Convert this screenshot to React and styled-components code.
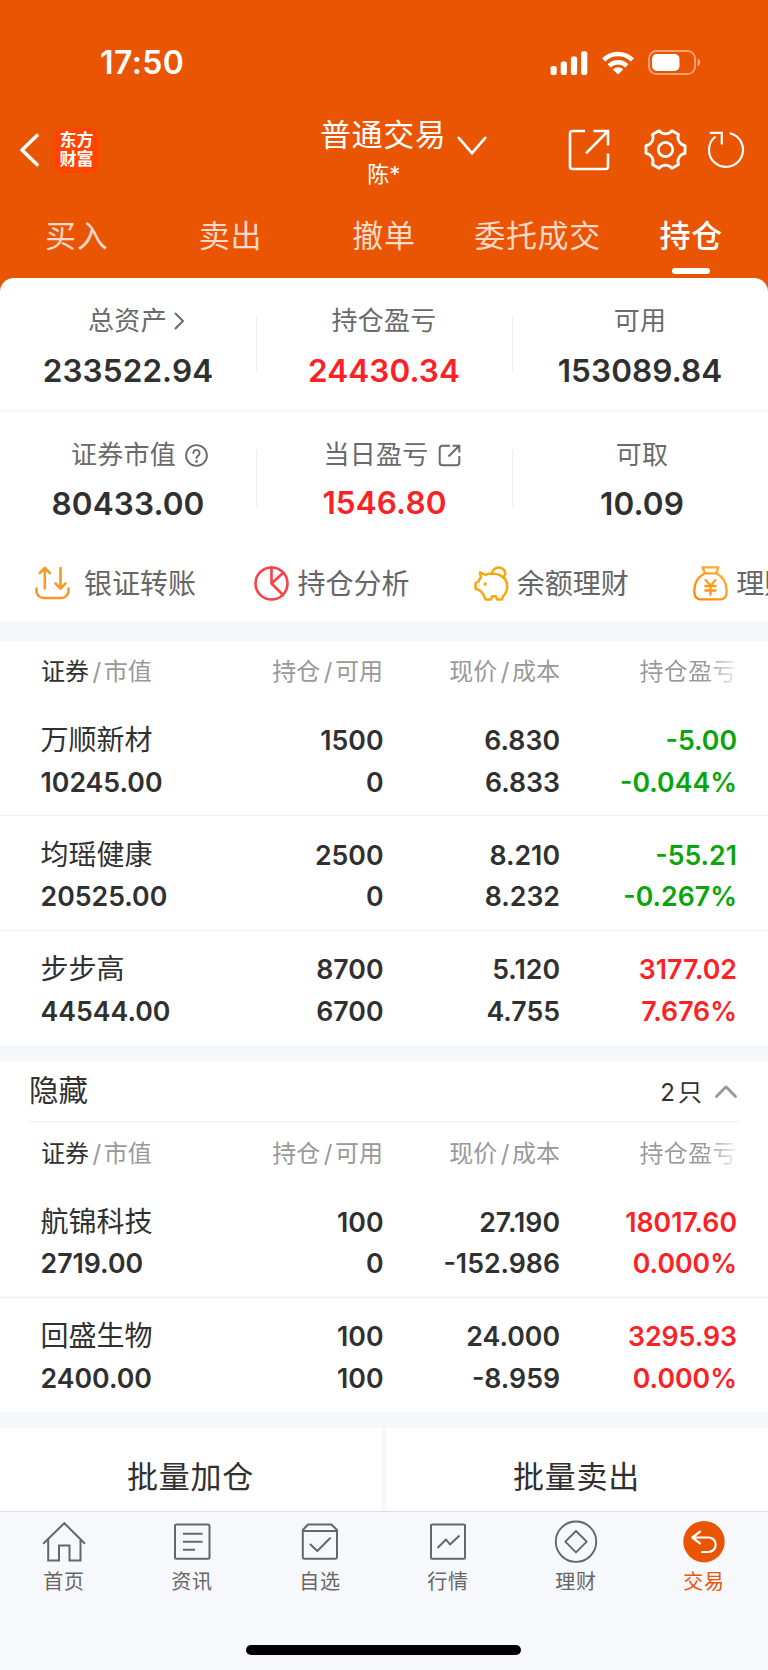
import React from "react";
import styled, { createGlobalStyle } from "styled-components";

const ORANGE = "#ea5504";
const RED = "#fb2226";
const GREEN = "#0aa50a";

const GlobalStyle = createGlobalStyle`
  * {
    box-sizing: border-box;
  }
  body {
    margin: 0;
    background: #f7f8fb;
    font-family: Inter, "Noto Sans CJK SC", sans-serif;
    color: #303030;
  }
  svg {
    display: block;
    flex: none;
  }
`;

const Page = styled.div`
  width: 768px;
  height: 1670px;
  overflow: hidden;
  display: flex;
  flex-direction: column;
  background: ${ORANGE};
`;

/* ---------- header ---------- */

const StatusBar = styled.div`
  height: 112px;
  padding: 13px 67px 0 100px;
  display: flex;
  align-items: center;
  justify-content: space-between;
  color: #fff;
`;

const Time = styled.span`
  font-size: 32px;
  line-height: 40px;
  font-weight: 600;
  letter-spacing: 0.4px;
`;

const StatusIcons = styled.div`
  display: flex;
  align-items: center;
  gap: 14px;
`;

const NavBar = styled.div`
  height: 76px;
  display: grid;
  grid-template-columns: 320px 248px auto;
  grid-template-rows: 76px;
  align-items: center;
  color: #fff;
`;

const NavLeft = styled.div`
  display: flex;
  align-items: center;
  gap: 14px;
  padding-left: 19px;
`;

const Logo = styled.div`
  width: 45px;
  height: 45px;
  padding-top: 3px;
  border-radius: 9px;
  background: #ff4500;
  font-size: 17px;
  line-height: 19px;
  font-weight: 700;
  text-align: center;
`;

const Title = styled.div`
  align-self: start;
  display: flex;
  gap: 11px;
`;

const TitleText = styled.div`
  padding-top: 2px;
  text-align: center;
`;

const TitleName = styled.div`
  font-size: 31px;
  line-height: 42px;
  letter-spacing: 0.6px;
`;

const TitleUser = styled.div`
  padding-left: 1px;
  font-size: 22px;
  line-height: 36px;
`;

const TitleArrow = styled.div`
  padding-top: 24px;
`;

const NavActions = styled.div`
  display: flex;
  align-items: center;
`;

const Tabs = styled.div`
  height: 90px;
  display: grid;
  grid-template-columns: repeat(5, 1fr);
`;

const Tab = styled.div`
  display: flex;
  flex-direction: column;
  align-items: center;
  padding-top: 28px;
  gap: 12px;
  font-size: 31px;
  line-height: 40px;
  letter-spacing: 0.7px;
  white-space: nowrap;
  font-weight: ${(p) => (p.$active ? 500 : 400)};
  color: ${(p) => (p.$active ? "#fff" : "rgba(255, 255, 255, 0.78)")};

  &::after {
    content: "";
    width: 38px;
    height: 6px;
    border-radius: 3px;
    background: ${(p) => (p.$active ? "#fff" : "transparent")};
  }
`;

/* ---------- summary ---------- */

const Summary = styled.section`
  height: 344px;
  flex: none;
  background: #fff;
  border-radius: 14px 14px 0 0;
`;

const StatRow = styled.div`
  height: 134px;
  padding-top: 25px;
  display: grid;
  grid-template-columns: repeat(3, 1fr);
  border-bottom: ${(p) => (p.$line ? "2px solid #f6f6f8" : "none")};
`;

const Stat = styled.div`
  position: relative;
  display: flex;
  flex-direction: column;
  align-items: center;

  & + &::before {
    content: "";
    position: absolute;
    left: 0;
    top: 13px;
    width: 1px;
    height: 57px;
    background: #eeeef0;
  }
`;

const StatLabel = styled.div`
  display: flex;
  align-items: center;
  gap: ${(p) => p.$gap || 9}px;
  height: 36px;
  font-size: 26px;
  letter-spacing: 0.3px;
  line-height: 36px;
  color: #6a6a6a;
  padding-left: ${(p) => p.$shift || 0}px;
`;

const StatValue = styled.div`
  margin-top: ${(p) => p.$top || 12}px;
  padding-left: ${(p) => p.$shift || 0}px;
  font-size: 31.5px;
  line-height: 40px;
  font-weight: 600;
  letter-spacing: 0.1px;
  color: ${(p) => (p.$red ? RED : "#303030")};
`;

const QuickActions = styled.div`
  height: 76px;
  padding: 0 0 1px 35px;
  display: flex;
  align-items: center;
  overflow: hidden;
`;

const QuickAction = styled.div`
  flex: none;
  width: 219.4px;
  display: flex;
  align-items: center;
  gap: ${(p) => p.$gap || 8}px;
  font-size: 28px;
  line-height: 40px;
  white-space: nowrap;
  color: #666;

  span {
    padding-top: 1px;
  }
`;

/* ---------- holdings ---------- */

const Band = styled.div`
  height: ${(p) => p.$h}px;
  flex: none;
  background: #f6f7fa;
`;

const Table = styled.section`
  flex: none;
  background: #fff;
`;

const HeadRow = styled.div`
  height: 60.5px;
  padding: 13px 31px 0 41px;
  display: grid;
  grid-template-columns: 160px 182px 177px 177px;
  font-size: 24px;
  line-height: 36px;
  text-align: right;
  color: #999;
`;

const HeadCell = styled.div`
  white-space: nowrap;
  text-align: ${(p) => (p.$left ? "left" : "right")};

  b {
    font-weight: 400;
    color: #303030;
  }
  i {
    font-style: normal;
    padding: 0 2.5px 0 3.5px;
  }
`;

const FadeCell = styled(HeadCell)`
  letter-spacing: 0.4px;
  color: transparent;
  background: linear-gradient(to right, #999 82%, rgba(153, 153, 153, 0.15) 100%);
  background-clip: text;
`;

const Row = styled.div`
  height: 114.5px;
  padding: 18.5px 31px 0 40.5px;
  display: grid;
  grid-template-columns: 160px 183px 176.500px 177px;
  border-bottom: ${(p) => (p.$last ? "none" : "1px solid #efeff2")};
`;

const Cell = styled.div`
  display: flex;
  flex-direction: column;
  align-items: ${(p) => (p.$left ? "flex-start" : "flex-end")};
  white-space: nowrap;
  font-size: 26.7px;
  line-height: 41.5px;
  font-weight: 600;
  color: ${(p) => p.$color || "#303030"};
`;

const StockName = styled.span`
  font-size: 28px;
  font-weight: 400;
`;

const HiddenBar = styled.div`
  height: 61.5px;
  margin: 0 29px;
  display: flex;
  align-items: center;
  justify-content: space-between;
  border-bottom: 2px solid #f4f4f6;
`;

const HiddenTitle = styled.div`
  padding-bottom: 2px;
  font-size: 29.5px;
  line-height: 40px;
`;

const HiddenCount = styled.div`
  display: flex;
  align-items: center;
  gap: 13px;
  padding-right: 2px;
  font-size: 24px;

  i {
    font-style: normal;
    padding-left: 3px;
  }
  svg {
    margin-top: 1px;
  }
`;

/* ---------- bottom ---------- */

const BatchBar = styled.div`
  height: 83px;
  flex: none;
  display: grid;
  grid-template-columns: 1fr 1fr;
  gap: 4px;
  background: #f6f7fa;
`;

const BatchButton = styled.div`
  padding: 28px 1px 0 0;
  background: #fff;
  font-size: 31px;
  line-height: 41px;
  letter-spacing: 0.7px;
  text-align: center;
`;

const BottomNav = styled.nav`
  flex: 1;
  display: flex;
  flex-direction: column;
  align-items: center;
  background: #f7f8fb;
  border-top: 1px solid #dddfe7;
`;

const NavItems = styled.div`
  width: 100%;
  height: 133px;
  padding-top: 8px;
  display: grid;
  grid-template-columns: repeat(6, 1fr);
`;

const NavItem = styled.div`
  display: flex;
  flex-direction: column;
  align-items: center;
  gap: 3px;
  font-size: 20px;
  line-height: 30px;
  letter-spacing: 0.8px;
  color: ${(p) => (p.$active ? ORANGE : "#666")};
`;

const HomeIndicator = styled.div`
  width: 275px;
  height: 10px;
  margin-right: 1px;
  border-radius: 5px;
  background: #000;
`;

/* ---------- icons ---------- */

const Svg = ({ w, h = w, sw = 2, children, ...rest }) => (
  <svg
    width={w}
    height={h}
    viewBox={`0 0 ${w} ${h}`}
    fill="none"
    stroke="currentColor"
    strokeWidth={sw}
    strokeLinecap="round"
    strokeLinejoin="round"
    {...rest}
  >
    {children}
  </svg>
);

const GearSvg = styled(Svg)`
  margin: 0 0 1px 33px;
`;

const RefreshSvg = styled(Svg)`
  margin-left: 20px;
`;

// six flat lobes joined by shallow arcs
const gearPath = (c, r) => {
  const pt = (deg) => {
    const a = (deg * Math.PI) / 180;
    return `${(c + r * Math.cos(a)).toFixed(2)} ${(c + r * Math.sin(a)).toFixed(2)}`;
  };
  let d = `M${pt(-11)}`;
  for (let k = 0; k < 6; k++) {
    d += `L${pt(k * 60 + 11)}A8.2 8.2 0 0 0 ${pt(k * 60 + 49)}`;
  }
  return d + "Z";
};

const SignalIcon = () => (
  <svg width="38" height="24" fill="#fff">
    <rect x="0.5" y="15" width="6.2" height="9" rx="2" />
    <rect x="10.7" y="10.5" width="6.2" height="13.5" rx="2" />
    <rect x="20.9" y="5.5" width="6.2" height="18.5" rx="2" />
    <rect x="31.1" y="0.3" width="6.2" height="23.7" rx="2" />
  </svg>
);

const WifiIcon = () => (
  <Svg w={32} h={24} sw={4.6} strokeLinecap="butt">
    <path d="M1.6 8.8a20.6 20.6 0 0 1 28.8 0" />
    <path d="M7.1 14.8a12.8 12.8 0 0 1 17.8 0" />
    <path d="M16 23.6l-5.2-5.2a7.4 7.4 0 0 1 10.4 0z" fill="#fff" stroke="none" />
  </Svg>
);

const BatteryIcon = () => (
  <svg width="53" height="25" fill="none">
    <rect x="1" y="1" width="46" height="23" rx="7.5" stroke="#fff" strokeOpacity="0.45" strokeWidth="1.9" />
    <rect x="4" y="4" width="27.5" height="17" rx="5" fill="#fff" />
    <path d="M49.6 8.6c1.7.8 2.6 2.2 2.6 3.9s-.9 3.1-2.6 3.9z" fill="#fff" fillOpacity="0.5" />
  </svg>
);

const BackIcon = () => (
  <Svg w={21} h={34} sw={3.6}>
    <path d="M18 2.5L3 17l15 14.5" />
  </Svg>
);

const DownIcon = () => (
  <Svg w={30} h={20} sw={2.6}>
    <path d="M1.8 1.8L15 17.2 28.2 1.8" strokeLinejoin="miter" />
  </Svg>
);

const ShareIcon = () => (
  <Svg w={43} sw={2.6} strokeLinecap="butt">
    <path d="M17 2H4.5Q2 2 2 4.5V37.5Q2 40 4.5 40H37.5Q40 40 40 37.5V24.5" />
    <path d="M25.5 2H40V16.5M39.5 2.5L18 24.3" strokeLinejoin="miter" />
  </Svg>
);

const GearIcon = () => (
  <GearSvg w={43} sw={2.8}>
    <path d={gearPath(21.5, 19.9)} />
    <circle cx="21.5" cy="21.5" r="7.2" />
  </GearSvg>
);

const RefreshIcon = () => (
  <RefreshSvg w={38} sw={2.2} strokeLinecap="butt">
    <path d="M22.8 2.3A17 17 0 1 1 8.5 5.5" />
    <path d="M2.8 1.9H14.8V13.5" strokeLinejoin="miter" />
  </RefreshSvg>
);

const RightIcon = () => (
  <Svg w={11} h={18} sw={2}>
    <path d="M1.5 1.5L9 9l-7.5 7.5" />
  </Svg>
);

const HelpIcon = () => (
  <Svg w={23} sw={1.9}>
    <circle cx="11.5" cy="11.5" r="10.4" />
    <path d="M8.4 9.1a3.1 3.1 0 1 1 4.8 2.5c-1.1.7-1.7 1.2-1.7 2.5" />
    <circle cx="11.5" cy="17.4" r="1.3" fill="currentColor" stroke="none" />
  </Svg>
);

const SmallShareIcon = () => (
  <Svg w={23} sw={2} strokeLinecap="butt">
    <path d="M12 1.7H4.5Q1.7 1.7 1.7 4.5V18.5Q1.7 21.3 4.5 21.3H18.5Q21.3 21.3 21.3 18.5V12" />
    <path d="M14.5 1.7H21.3V8.5M21 2L10.5 12.5" strokeLinejoin="miter" />
  </Svg>
);

const TransferIcon = () => (
  <Svg w={35} sw={2.6} color="#f59a23">
    <path d="M1.5 22.5v2.5a7 7 0 0 0 7 7h18a7 7 0 0 0 7-7v-2.5" />
    <path d="M9.8 22.5V2M4.8 7l5-5 5 5M25.5 2v20.5M20.5 17.5l5 5 5-5" />
  </Svg>
);

const PieIcon = () => (
  <Svg w={35} sw={2.6} color="#fb4046">
    <circle cx="17.5" cy="17.5" r="16" />
    <path d="M17.5 1.5V17.5L29 29M17.5 17.5L29.3 6.7" />
  </Svg>
);

// the body outline is drawn closed, the coin sits behind its back
const PiggyIcon = () => (
  <Svg w={35} sw={2.5} color="#fba60a">
    <path d="M17.8 8C18 4.5 21 1.4 24.8 1.4c4.3 0 7 3.4 6.2 7.2-.3 1.2-.8 2-1.6 2.900" />
    <path d="M5.8 6.5L11.5 8.800C15 7.5 21 7.200 25.5 9c5.300 2.200 7.700 6 7.700 11 0 4.500-1.300 7.800-4.200 10.300l-1 3.200h-5l-1.200-3.200h-3.600l-1.200 3.200h-5.500l-1.700-4.200C9 27.500 8 26.200 6.500 24.800L1.500 22.500v-5.500l3-1.500c.5-1.500 1-2.500 2.500-4z" />
    <circle cx="11.2" cy="18" r="1.7" fill="currentColor" stroke="none" />
  </Svg>
);

const BagIcon = () => (
  <Svg w={35} sw={2.3} stroke="url(#bag)">
    <defs>
      <linearGradient id="bag" gradientUnits="userSpaceOnUse" x1="0" y1="35" x2="28" y2="0">
        <stop offset="0" stopColor="#ff8200" />
        <stop offset="1" stopColor="#ffb13c" />
      </linearGradient>
    </defs>
    <path d="M9.5 1.3h16l-2.5 6H12z" />
    <path d="M12 7.3C5.5 10.5 1.3 17 1.3 25c0 5.5 2 8.3 6 8.3h20.4c4 0 6-2.8 6-8.3 0-8-4.2-14.5-10.7-17.7" />
    <path d="M12.5 14l5 5.5 5-5.5M17.5 19.5v9.3M12.3 20h10.4M12.3 24.5h10.4" />
  </Svg>
);

const UpIcon = () => (
  <Svg w={22} h={13} sw={2.8} color="#999">
    <path d="M1.5 11.5L11 1.8l9.5 9.7" />
  </Svg>
);

const HomeIcon = () => (
  <Svg w={44} sw={2} strokeLinecap="butt">
    <path d="M1.2 23.8L22.3 3.2 43 23.8M6.2 19.3V40.6H17V25.5H27.5V40.6H38.5V19.3" strokeLinejoin="miter" />
  </Svg>
);

const NewsIcon = () => (
  <Svg w={44} sw={2} strokeLinecap="butt">
    <rect x="5" y="4.5" width="34.5" height="34.3" rx="1.5" />
    <path d="M13 13.7h19.5M13 21.7h19.5M13 29.7h12" />
  </Svg>
);

const WatchIcon = () => (
  <Svg w={44} sw={2}>
    <path d="M4.8 10L10 4.5H33.5L39 10V37Q39 38.8 37 38.8H6.5Q4.8 38.8 4.8 37ZM4.8 11H39" />
    <path d="M12.5 24.5l6.8 6.5L32 18.3" />
  </Svg>
);

const QuoteIcon = () => (
  <Svg w={44} sw={2} strokeLinecap="butt">
    <rect x="5" y="4.5" width="34" height="34.3" rx="1" />
    <path d="M11.5 28l8.5-8.5 4 5L33.5 15.5" />
  </Svg>
);

const WealthIcon = () => (
  <Svg w={44} sw={1.9}>
    <circle cx="22" cy="21.7" r="20.2" />
    <path d="M22 11L32.7 21.7 22 32.4 11.3 21.7z" />
  </Svg>
);

const TradeIcon = () => (
  <Svg w={44} sw={2.2}>
    <circle cx="22" cy="21.7" r="20.7" fill={ORANGE} stroke="none" />
    <path d="M18 11.7L10.3 17.5 18 23.3M10.5 17.5H26.500a7.100 7.100 0 0 1 0 14.500H20" stroke="#fff" />
  </Svg>
);

/* ---------- data ---------- */

const tabs = ["买入", "卖出", "撤单", "委托成交", "持仓"];

const holdings = [
  ["万顺新材", "10245.00", "1500", "0", "6.830", "6.833", "-5.00", "-0.044%"],
  ["均瑶健康", "20525.00", "2500", "0", "8.210", "8.232", "-55.21", "-0.267%"],
  ["步步高", "44544.00", "8700", "6700", "5.120", "4.755", "3177.02", "7.676%"],
];

const hiddenHoldings = [
  ["航锦科技", "2719.00", "100", "0", "27.190", "-152.986", "18017.60", "0.000%"],
  ["回盛生物", "2400.00", "100", "100", "24.000", "-8.959", "3295.93", "0.000%"],
];

const navItems = [
  ["首页", HomeIcon],
  ["资讯", NewsIcon],
  ["自选", WatchIcon],
  ["行情", QuoteIcon],
  ["理财", WealthIcon],
  ["交易", TradeIcon],
];

const HoldingsHead = () => (
  <HeadRow>
    <HeadCell $left>
      <b>证券</b>
      <i>/</i>市值
    </HeadCell>
    <HeadCell>
      持仓<i>/</i>可用
    </HeadCell>
    <HeadCell>
      现价<i>/</i>成本
    </HeadCell>
    <FadeCell>持仓盈亏</FadeCell>
  </HeadRow>
);

const HoldingRows = ({ rows }) =>
  rows.map(([name, value, total, usable, price, cost, profit, rate], index) => (
    <Row key={name} $last={index === rows.length - 1}>
      <Cell $left>
        <StockName>{name}</StockName>
        <span>{value}</span>
      </Cell>
      <Cell>
        <span>{total}</span>
        <span>{usable}</span>
      </Cell>
      <Cell>
        <span>{price}</span>
        <span>{cost}</span>
      </Cell>
      <Cell $color={profit.startsWith("-") ? GREEN : RED}>
        <span>{profit}</span>
        <span>{rate}</span>
      </Cell>
    </Row>
  ));

const App = () => {
  return (
    <>
      <GlobalStyle />
      <Page>
        <StatusBar>
          <Time>17:50</Time>
          <StatusIcons>
            <SignalIcon />
            <WifiIcon />
            <BatteryIcon />
          </StatusIcons>
        </StatusBar>

        <NavBar>
          <NavLeft>
            <BackIcon />
            <Logo>
              东方
              <br />
              财富
            </Logo>
          </NavLeft>
          <Title>
            <TitleText>
              <TitleName>普通交易</TitleName>
              <TitleUser>陈*</TitleUser>
            </TitleText>
            <TitleArrow>
              <DownIcon />
            </TitleArrow>
          </Title>
          <NavActions>
            <ShareIcon />
            <GearIcon />
            <RefreshIcon />
          </NavActions>
        </NavBar>

        <Tabs>
          {tabs.map((tab) => (
            <Tab key={tab} $active={tab === "持仓"}>
              {tab}
            </Tab>
          ))}
        </Tabs>

        <Summary>
          <StatRow $line>
            <Stat>
              <StatLabel $shift={17} $gap={7}>
                总资产
                <RightIcon />
              </StatLabel>
              <StatValue>233522.94</StatValue>
            </Stat>
            <Stat>
              <StatLabel>持仓盈亏</StatLabel>
              <StatValue $red>24430.34</StatValue>
            </Stat>
            <Stat>
              <StatLabel>可用</StatLabel>
              <StatValue>153089.84</StatValue>
            </Stat>
          </StatRow>
          <StatRow>
            <Stat>
              <StatLabel $shift={23}>
                证券市值
                <HelpIcon />
              </StatLabel>
              <StatValue $top={11}>80433.00</StatValue>
            </Stat>
            <Stat>
              <StatLabel $shift={16}>
                当日盈亏
                <SmallShareIcon />
              </StatLabel>
              <StatValue $red $top={10} $shift={1}>
                1546.80
              </StatValue>
            </Stat>
            <Stat>
              <StatLabel $shift={4}>可取</StatLabel>
              <StatValue $top={11} $shift={4}>
                10.09
              </StatValue>
            </Stat>
          </StatRow>
          <QuickActions>
            <QuickAction $gap={14}>
              <TransferIcon />
              <span>银证转账</span>
            </QuickAction>
            <QuickAction>
              <PieIcon />
              <span>持仓分析</span>
            </QuickAction>
            <QuickAction>
              <PiggyIcon />
              <span>余额理财</span>
            </QuickAction>
            <QuickAction>
              <BagIcon />
              <span>理财</span>
            </QuickAction>
          </QuickActions>
        </Summary>

        <Band $h={19} />
        <Table>
          <HoldingsHead />
          <HoldingRows rows={holdings} />
        </Table>

        <Band $h={16} />
        <Table>
          <HiddenBar>
            <HiddenTitle>隐藏</HiddenTitle>
            <HiddenCount>
              <span>
                2<i>只</i>
              </span>
              <UpIcon />
            </HiddenCount>
          </HiddenBar>
          <HoldingsHead />
          <HoldingRows rows={hiddenHoldings} />
        </Table>

        <Band $h={16} />
        <BatchBar>
          <BatchButton>批量加仓</BatchButton>
          <BatchButton>批量卖出</BatchButton>
        </BatchBar>

        <BottomNav>
          <NavItems>
            {navItems.map(([label, Icon]) => (
              <NavItem key={label} $active={label === "交易"}>
                <Icon />
                {label}
              </NavItem>
            ))}
          </NavItems>
          <HomeIndicator />
        </BottomNav>
      </Page>
    </>
  );
};

export default App;
